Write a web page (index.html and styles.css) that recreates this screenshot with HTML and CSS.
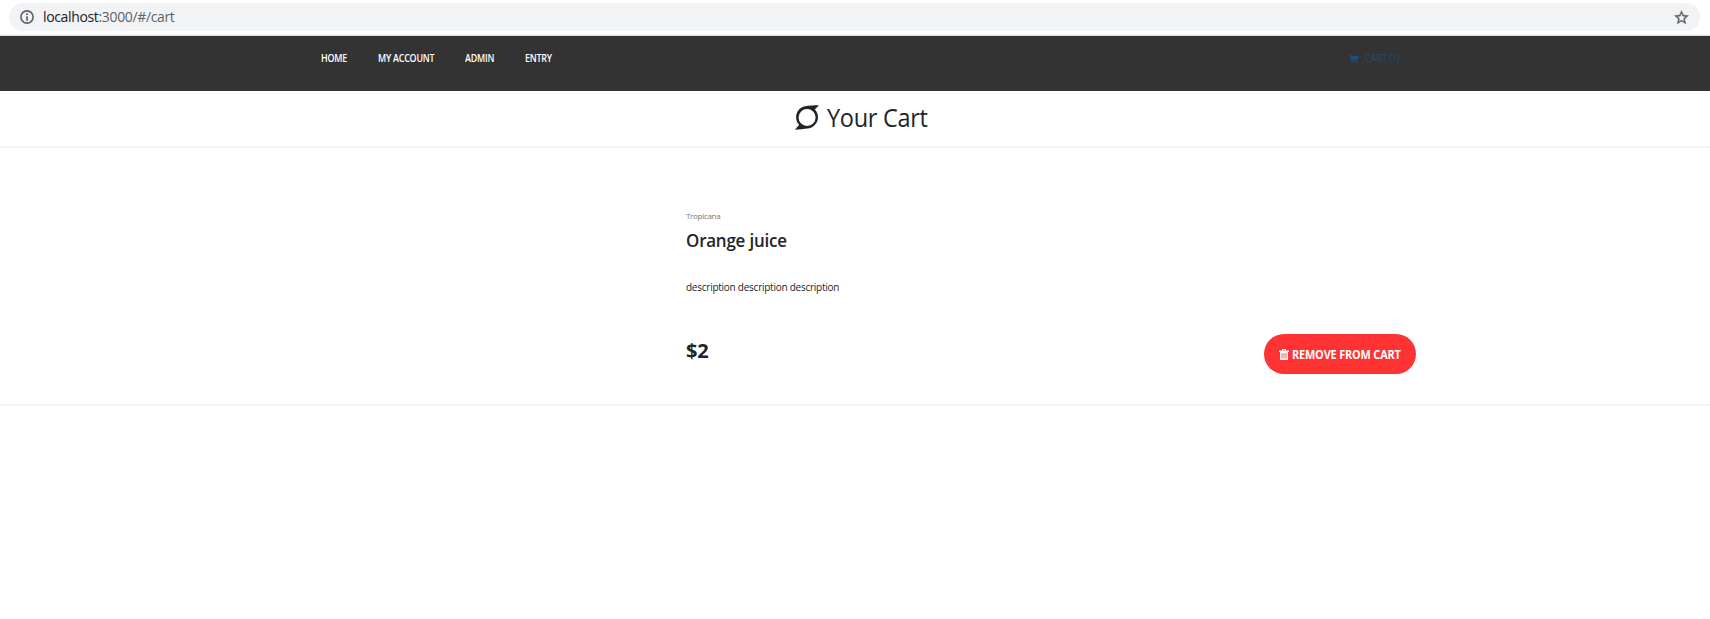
FILE: index.html
```html
<!DOCTYPE html>
<html lang="en">
<head>
<meta charset="utf-8">
<title>Your Cart</title>
<link rel="stylesheet" href="styles.css">
</head>
<body>
<div class="browser-bar">
  <div class="address">
    <svg class="info" viewBox="0 0 14 14"><circle cx="7" cy="7" r="6.1" fill="none" stroke="#5f6368" stroke-width="1.6"/><path d="M6.2 3.200h1.700V5H6.200zM6.200 6.200h1.700v4.600H6.200z" fill="#5f6368"/></svg>
    <span class="url"><span class="host">localhost</span>:3000/#/cart</span>
    <svg class="star" viewBox="0 0 24 24"><path fill="#5f6368" stroke="#5f6368" stroke-width=".5" d="M22 9.240l-7.190-.62L12 2 9.190 8.630 2 9.240l5.460 4.730L5.820 21 12 17.270 18.180 21l-1.630-7.030L22 9.240zM12 15.400l-3.760 2.270 1-4.280-3.320-2.880 4.380-.38L12 6.100l1.710 4.040 4.380.38-3.320 2.880 1 4.280L12 15.400z"/></svg>
  </div>
</div>
<nav class="nav">
  <a class="link home"><span>HOME</span></a>
  <a class="link account"><span>MY ACCOUNT</span></a>
  <a class="link admin"><span>ADMIN</span></a>
  <a class="link entry"><span>ENTRY</span></a>
  <a class="cart-link">
    <svg viewBox="0 0 10 8"><path fill="#1f4e79" d="M0 0h2l.4 1H10L9.200 4.600 3.500 5.100v.5H9v.8H2.600L1.500.9H0z"/><circle cx="3.500" cy="7.200" r=".8" fill="#1f4e79"/><circle cx="8.100" cy="7.200" r=".8" fill="#1f4e79"/></svg>
    <span>CART (1)</span>
  </a>
</nav>
<header class="heading">
  <svg viewBox="0 0 24 25"><path fill="#212529" fill-rule="evenodd" d="M24 .2C20 .2 14 .4 10 1.300 4.500 2.500 1.100 7 1.100 12.200c0 3 1 5.500 3 7.600L0 24.700c4-.2 9-.7 13-1.200 6-.8 10-5.700 10-11.200 0-3.100-1.200-5.700-3.200-7.700zM12.100 4a8.500 8.500 0 1 1 0 17 8.500 8.500 0 0 1 0-17z"/></svg>
  <h1>Your Cart</h1>
</header>
<main class="item">
  <div class="brand">Tropicana</div>
  <h2>Orange juice</h2>
  <p>description description description</p>
  <div class="purchase">
    <span class="price">$2</span>
    <button class="remove">
      <svg viewBox="0 0 10 11"><path fill="#fff" fill-rule="evenodd" d="M3 0h4v1.500h3V3H9v8H1V3H0V1.500h3zM4 .8v.7h2V.8zM2.600 4v5.500h.8V4zM4.600 4v5.500h.8V4zM6.600 4v5.500h.8V4z"/></svg>
      <span>REMOVE FROM CART</span>
    </button>
  </div>
</main>
</body>
</html>
```
FILE: styles.css
```css
* { box-sizing: border-box; }
body { margin: 0; background: #fff; color: #212529; font-family: "Open Sans", "Noto Sans", sans-serif; }
h1, h2, p { margin: 0; }
svg { display: block; flex: none; }
span, a, h1, h2, p { white-space: nowrap; }
.browser-bar { height: 36px; padding: 3px 10px 0 9px; border-bottom: 1px solid #dadce0; }
.address { height: 28px; display: flex; align-items: center; padding: 0 10px 0 11px; border-radius: 14px; background: #f1f3f4; }
.info { width: 14px; height: 14px; }
.url { margin-left: 9px; font-size: 14px; line-height: 20px; letter-spacing: -.35px; color: #5f6368; }
.host { color: #202124; }
.star { width: 17px; height: 17px; margin-left: auto; }
.nav { display: flex; height: 55px; padding: 15px 309px 0 321px; background: #333; font-size: 10px; line-height: 14px; }
.link { color: #fff; font-weight: 600; letter-spacing: -.25px; }
.link span { display: inline-block; transform: scaleX(.89); transform-origin: left; }
.home { width: 57px; }
.account { width: 87px; }
.admin { width: 60px; }
.cart-link { display: flex; width: 51px; margin-left: auto; color: #1f4e79; letter-spacing: 0; }
.cart-link span { transform: scaleX(.9); transform-origin: left; }
.cart-link svg { width: 10px; height: 8px; margin: 4px 6px 0 -1px; }
.heading { display: flex; height: 57px; padding: 14px 0 0 795px; border-bottom: 2px solid #f3f3f3; }
.heading svg { width: 24px; height: 25px; }
.heading h1 { margin: -1px 0 0 8px; font-size: 25px; font-weight: 400; line-height: 26px; letter-spacing: -.3px; transform: scaleX(.94); transform-origin: left; }
.item { height: 258px; padding: 62px 294px 0 686px; border-bottom: 2px solid #f3f3f3; }
.brand { height: 18px; color: #777; font-size: 8px; line-height: 12px; letter-spacing: -.3px; }
.item h2 { height: 52px; font-size: 18px; font-weight: 600; line-height: 24px; letter-spacing: -.2px; transform: scaleX(.94); transform-origin: left; }
.item p { height: 54px; font-size: 10px; line-height: 14px; letter-spacing: -.25px; }
.purchase { display: flex; justify-content: space-between; }
.price { font-size: 20px; font-weight: 700; line-height: 33px; letter-spacing: -.2px; }
.remove { display: flex; align-items: center; width: 152px; height: 40px; padding: 0 0 0 15px; border: 0; border-radius: 20px; background: #f33; color: #fff; font: 700 13px/18px "Open Sans", "Noto Sans", sans-serif; }
.remove svg { width: 10px; height: 11px; }
.remove span { margin-left: 3px; letter-spacing: -.2px; transform: scaleX(.84); transform-origin: left; }
```
